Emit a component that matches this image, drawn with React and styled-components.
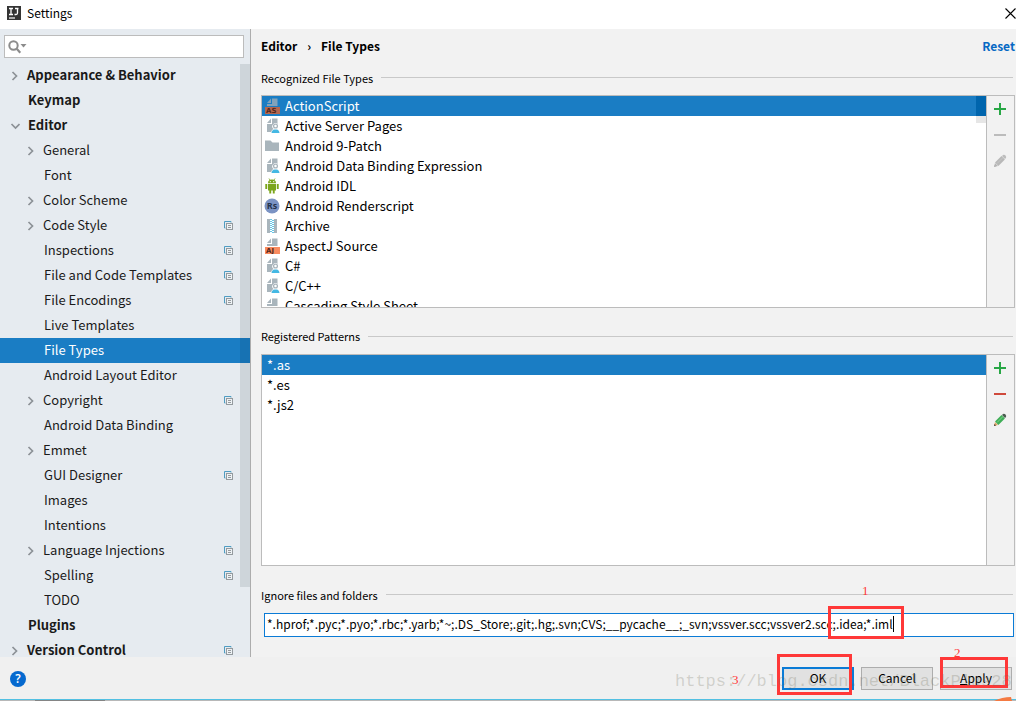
import React, { useState } from "react";
import styled, { createGlobalStyle, css } from "styled-components";

const sans = `"Noto Sans CJK SC", "Open Sans", sans-serif`;

const GlobalStyle = createGlobalStyle`
  * { box-sizing: border-box; }
  body { margin: 0; background: #f2f2f2; }
  button, input { font: inherit; color: inherit; }
`;

const Window = styled.div`
  display: flex;
  flex-direction: column;
  height: 100vh;
  overflow: hidden;
  background: #f2f2f2;
  color: #000;
  font: 13px/20px ${sans};
`;

const TitleBar = styled.header`
  flex: none;
  display: flex;
  align-items: center;
  gap: 6px;
  height: 29px;
  padding: 0 0 3px 7px;
  background: #fff;
`;

const WindowTitle = styled.h1`
  flex: 1;
  margin: 0;
  font-size: 12px;
  font-weight: 400;
`;

const IconButton = styled.button`
  display: flex;
  align-items: center;
  justify-content: center;
  flex: none;
  width: ${(p) => p.$width || 26}px;
  height: 26px;
  padding: 0;
  border: 0;
  background: none;
`;

const Body = styled.div`
  flex: 1;
  min-height: 0;
  display: flex;
`;

const Sidebar = styled.aside`
  flex: none;
  display: flex;
  flex-direction: column;
  width: 251px;
  border-right: 1px solid #adadad;
  background: #e6ebf0;
`;

const SearchBox = styled.label`
  flex: none;
  display: flex;
  align-items: center;
  gap: 2px;
  height: 23px;
  margin: 6px 6px 5px 4px;
  padding: 0 3px;
  border: 1px solid #bcbcbc;
  background: #fff;
`;

const SearchInput = styled.input`
  flex: 1;
  min-width: 0;
  padding: 0;
  border: 0;
  outline: 0;
  background: none;
`;

const TreeArea = styled.nav`
  position: relative;
  flex: 1;
  min-height: 0;
  overflow: hidden;
`;

const Tree = styled.ul`
  margin: 0;
  padding: 0;
  list-style: none;
`;

const TreeRow = styled.li`
  display: flex;
  align-items: center;
  height: 25px;
  padding: 0 17px 0 ${(p) => 8 + p.$level * 16}px;
  color: #1a1a1a;
  ${(p) => p.$bold && css`font-weight: 700;`}
  ${(p) => p.$selected && css`background: #1a7dc4; color: #fff;`}
`;

const ChevronSlot = styled.span`
  flex: none;
  display: flex;
  width: ${(p) => (p.$leaf ? 20 : 19)}px;
`;

const TreeLabel = styled.span`
  flex: 1;
  padding-bottom: 2px;
  white-space: nowrap;
`;

const ScrollThumb = styled.div`
  position: absolute;
  top: ${(p) => p.$top}px;
  right: 0;
  width: 10px;
  height: ${(p) => p.$size}%;
  background: ${(p) => p.$color};
`;

const SelectedThumb = styled.div`
  position: absolute;
  top: 0;
  right: 0;
  width: 10px;
  height: 20px;
  background: #0065ad;
`;

const Main = styled.main`
  flex: 1;
  min-width: 0;
  display: flex;
  flex-direction: column;
  padding: 0 1px 20px 10px;
`;

const PageHeader = styled.div`
  flex: none;
  display: flex;
  align-items: center;
  justify-content: space-between;
  height: 35px;
  padding-bottom: 2px;
  font-weight: 700;
`;

const Crumbs = styled.h2`
  display: flex;
  align-items: center;
  gap: 10px;
  margin: 0;
  font-size: 12px;
`;

const ResetLink = styled.a`
  color: #0669c4;
  font-size: 12px;
  text-decoration: none;
`;

const SectionTitle = styled.div`
  flex: none;
  display: flex;
  align-items: center;
  gap: 8px;
  height: 31px;
  padding: 0 2px 4px 0;
  margin-top: ${(p) => (p.$spaced ? 15 : 0)}px;
  font-size: 11px;
  white-space: nowrap;

  &::after {
    content: "";
    flex: 1;
    height: 1px;
    background: #c9c9c9;
  }
`;

const ListPanel = styled.section`
  flex: 1;
  min-height: 0;
  display: flex;
  border: 1px solid #bcbcbc;
`;

const ListArea = styled.div`
  position: relative;
  flex: 1;
  overflow: hidden;
  background: #fff;
`;

const List = styled.ul`
  margin: 0;
  padding: 0;
  list-style: none;
`;

const ListRow = styled.li`
  display: flex;
  align-items: center;
  gap: 5px;
  height: 20px;
  padding-left: ${(p) => (p.$plain ? 5 : 2)}px;
  white-space: nowrap;
  ${(p) => p.$selected && css`background: #1a7dc4; color: #fff;`}
`;

const ListTools = styled.div`
  flex: none;
  width: 28px;
  border-left: 1px solid #bcbcbc;
  background: #f2f2f2;
`;

const Field = styled.div`
  position: relative;
  flex: none;
  margin: 1px 1px 0 3px;
`;

const FieldInput = styled.input`
  display: block;
  width: 100%;
  height: 24px;
  padding: 0 2px 3px;
  border: 1px solid #0a7bd6;
  outline: 0;
  border-radius: 0;
  background: #fff;
  font-size: 12px;
`;

const Caret = styled.span`
  position: absolute;
  top: 3px;
  left: 629px;
  width: 1px;
  height: 16px;
  background: #000;
`;

const Footer = styled.footer`
  position: relative;
  flex: none;
  display: flex;
  align-items: center;
  gap: 7px;
  height: 44px;
  padding: 0 4px 0 5px;
  background: #f0f0f0;
  border-bottom: 1px solid #b8b8b8;
  box-shadow: inset 0 -1px 0 #52c0e2;
`;

const Spacer = styled.span`
  flex: 1;
`;

const Action = styled.div`
  position: relative;
`;

const DialogButton = styled.button`
  display: block;
  width: 72px;
  height: 23px;
  padding: 0 0 2px;
  border: ${(p) => (p.$primary ? "2px solid #0a7bd6" : "1px solid #adadad")};
  background: #e1e1e1;
  font-size: 12px;
  line-height: 17px;
`;

const MarkBox = styled.span`
  position: absolute;
  top: ${(p) => p.$top}px;
  left: ${(p) => p.$left}px;
  width: ${(p) => p.$width}px;
  height: ${(p) => p.$height}px;
  border: 3px solid #ff3838;
  pointer-events: none;
`;

const MarkNumber = styled.span`
  position: absolute;
  top: ${(p) => p.$top}px;
  left: ${(p) => p.$left}px;
  color: #ff3838;
  font: 13px/14px "Liberation Serif", serif;
`;

const Watermark = styled.span`
  position: absolute;
  z-index: 1;
  left: calc(100% - 341px);
  bottom: 8px;
  color: rgba(110, 110, 90, 0.25);
  font: 17px/20px "Liberation Mono", monospace;
  white-space: nowrap;
  pointer-events: none;
`;

const Swoosh = styled.svg`
  position: absolute;
  right: 0;
  bottom: -1px;
`;

const TaskStrip = styled.span`
  position: absolute;
  left: 35px;
  bottom: -1px;
  width: 70px;
  height: 1px;
  background: #858585;
`;

function LogoIcon() {
  return (
    <svg width="14" height="14" viewBox="0 0 14 14" aria-hidden="true">
      <rect width="14" height="14" fill="#343434" />
      <path d="M2 2.5h4M2 8.5h4M4 2.5v6M8 2.5h3.5M10.5 2.5V7q0 1.5-1.5 1.5H7.5" stroke="#fff" strokeWidth="1.3" fill="none" />
      <path d="M2 12h6" stroke="#fff" strokeWidth="1.2" />
    </svg>
  );
}

function CloseIcon() {
  return (
    <svg width="11" height="11" viewBox="0 0 11 11" aria-hidden="true">
      <path d="M.5.5l10 10M10.5.5l-10 10" stroke="#000" strokeWidth="1.1" />
    </svg>
  );
}

function SearchIcon() {
  return (
    <svg width="19" height="14" viewBox="0 0 19 14" aria-hidden="true">
      <circle cx="5.5" cy="5.5" r="4.2" stroke="#8c8c8c" strokeWidth="2" fill="none" />
      <path d="M8.7 8.7l3.6 4" stroke="#8c8c8c" strokeWidth="2.2" />
      <path d="M12.5 4h6l-3 3.4z" fill="#8c8c8c" />
    </svg>
  );
}

function Chevron({ open }) {
  return (
    <svg width="12" height="10" viewBox="0 0 12 10" aria-hidden="true">
      <path d={open ? "M3.5 3l4 4 4-4" : "M4.5 1l4 4-4 4"} stroke="#8c9196" strokeWidth="1.7" fill="none" />
    </svg>
  );
}

function CopyIcon() {
  return (
    <svg width="9" height="9" viewBox="0 0 9 9" aria-hidden="true">
      <path d="M1.5 7H.5V.5H7V1.5" stroke="#4f9cc2" fill="none" />
      <rect x="2.5" y="2.5" width="6" height="6" stroke="#949a9e" fill="#eef2f5" />
      <path d="M4 4.5h3M4 6.5h3" stroke="#949a9e" />
    </svg>
  );
}

const tag = { AS: "#b5674f", AJ: "#f98b5f" };

function FileIcon({ kind }) {
  if (kind === "folder")
    return (
      <svg width="16" height="16" viewBox="0 0 16 16" aria-hidden="true">
        <path d="M1 2.5h5.5l2 2H15V13H1z" fill="#a9b5bc" />
      </svg>
    );
  if (kind === "android")
    return (
      <svg width="16" height="16" viewBox="0 0 16 16" fill="#7ba51c" aria-hidden="true">
        <path d="M4 5.2a4 3.7 0 0 1 8 0z" />
        <path d="M5 .5l1.3 2M11 .5L9.7 2.5" stroke="#7ba51c" strokeWidth=".8" />
        <path d="M4 6h8v6.5H4zM1.3 6h1.9v5H1.3zM12.8 6h1.9v5h-1.9zM5.3 12h1.9v3.5H5.3zM8.8 12h1.9v3.5H8.8z" />
        <circle cx="6.3" cy="3.7" r=".6" fill="#fff" />
        <circle cx="9.7" cy="3.7" r=".6" fill="#fff" />
      </svg>
    );
  if (kind === "rs")
    return (
      <svg width="16" height="16" viewBox="0 0 16 16" aria-hidden="true">
        <circle cx="8" cy="8" r="7.5" fill="#7b93c4" />
        <text x="8" y="11" textAnchor="middle" fontFamily="Open Sans" fontSize="9" fontWeight="700" fill="#26334d">Rs</text>
      </svg>
    );
  if (kind === "archive")
    return (
      <svg width="16" height="16" viewBox="0 0 16 16" aria-hidden="true">
        <path d="M3 1h3v14H3zM10 1h3v14h-3z" fill="#a9b5bc" />
        <path d="M7 1v14M9 2v13" stroke="#42b8e0" strokeWidth="1.6" strokeDasharray="1 1" />
      </svg>
    );
  if (kind === "user")
    return (
      <svg width="16" height="16" viewBox="0 0 16 16" aria-hidden="true">
        <path d="M8 .5h5.5V14H3V6h5zM7 .5V5H3z" fill="#a9b5bc" />
        <path d="M7 16q0-4 2.5-5a3.2 3.2 0 1 1 4 0q2.500 1 2.500 5z" fill="#fff" />
        <circle cx="11.5" cy="8" r="1.9" fill="none" stroke="#a9b5bc" strokeWidth="1.3" />
        <path d="M7.500 15q.5-3.500 3-3.500h2q2.500 0 3 3.500z" fill="#45b8e3" />
      </svg>
    );
  return (
    <svg width="16" height="16" viewBox="0 0 16 16" aria-hidden="true">
      <path d="M8 .5h5.500V8H3V6h5zM7 .5V5H3z" fill={kind === "AS" ? "#82a3ba" : "#a9b5bc"} />
      {tag[kind] && (
        <>
          <rect x="1" y="9" width="15" height="7" fill={tag[kind]} />
          <text x="2" y="15" fontFamily="DejaVu Sans" fontSize="7" fontWeight="700" fill="#54271c">{kind}</text>
        </>
      )}
    </svg>
  );
}

function PlusIcon() {
  return (
    <svg width="12" height="12" viewBox="0 0 12 12" aria-hidden="true">
      <path d="M0 6h12M6 0v12" stroke="#28a745" strokeWidth="2" />
    </svg>
  );
}

function MinusIcon({ color }) {
  return (
    <svg width="12" height="12" viewBox="0 0 12 12" aria-hidden="true">
      <path d="M0 6h12" stroke={color} strokeWidth="2" />
    </svg>
  );
}

function PencilIcon({ muted }) {
  return (
    <svg width="14" height="14" viewBox="0 0 14 14" aria-hidden="true">
      <path d="M1 13l1-4 3 3z" fill={muted ? "#b5b5b5" : "#e3a868"} />
      <path d="M1 13l.5-2 1.5 1.5z" fill={muted ? "#b5b5b5" : "#333"} />
      <path d="M2 8.600L8.500 2.100l3.400 3.400L5.400 12z" fill={muted ? "#b8b8b8" : "#3fae57"} />
      <path d="M4 9.500l6-6" stroke={muted ? "#c6c6c6" : "#80d48d"} />
      <path d="M9 2l1-1q1.500-.5 2.500.5t.5 2.500l-1 1z" fill={muted ? "#bdbdbd" : "#4b5d50"} />
    </svg>
  );
}

function HelpIcon() {
  return (
    <svg width="16" height="16" viewBox="0 0 16 16" aria-hidden="true">
      <circle cx="8" cy="8" r="8" fill="#0569cf" />
      <text x="8" y="12" textAnchor="middle" fontFamily="Open Sans" fontSize="12" fontWeight="600" fill="#fff">?</text>
    </svg>
  );
}

const tree = [
  { label: "Appearance & Behavior", level: 0, chevron: "closed" },
  { label: "Keymap", level: 0 },
  { label: "Editor", level: 0, chevron: "open", wide: true },
  { label: "General", level: 1, chevron: "closed" },
  { label: "Font", level: 1 },
  { label: "Color Scheme", level: 1, chevron: "closed" },
  { label: "Code Style", level: 1, chevron: "closed", copy: true },
  { label: "Inspections", level: 1, copy: true },
  { label: "File and Code Templates", level: 1, copy: true },
  { label: "File Encodings", level: 1, copy: true },
  { label: "Live Templates", level: 1 },
  { label: "File Types", level: 1, selected: true },
  { label: "Android Layout Editor", level: 1 },
  { label: "Copyright", level: 1, chevron: "closed", copy: true },
  { label: "Android Data Binding", level: 1 },
  { label: "Emmet", level: 1, chevron: "closed" },
  { label: "GUI Designer", level: 1, copy: true },
  { label: "Images", level: 1 },
  { label: "Intentions", level: 1 },
  { label: "Language Injections", level: 1, chevron: "closed", copy: true },
  { label: "Spelling", level: 1, copy: true },
  { label: "TODO", level: 1 },
  { label: "Plugins", level: 0 },
  { label: "Version Control", level: 0, chevron: "closed", copy: true },
];

const fileTypes = [
  ["AS", "ActionScript"],
  ["user", "Active Server Pages"],
  ["folder", "Android 9-Patch"],
  ["user", "Android Data Binding Expression"],
  ["android", "Android IDL"],
  ["rs", "Android Renderscript"],
  ["archive", "Archive"],
  ["AJ", "AspectJ Source"],
  ["user", "C#"],
  ["user", "C/C++"],
  ["css", "Cascading Style Sheet"],
];

const patterns = ["*.as", "*.es", "*.js2"];

function Tools({ muted }) {
  return (
    <ListTools>
      <IconButton type="button" aria-label="Add"><PlusIcon /></IconButton>
      <IconButton type="button" aria-label="Remove"><MinusIcon color={muted ? "#bcbcbc" : "#cf4a3c"} /></IconButton>
      <IconButton type="button" aria-label="Edit"><PencilIcon muted={muted} /></IconButton>
    </ListTools>
  );
}

export default function App() {
  const [ignored, setIgnored] = useState(
    "*.hprof;*.pyc;*.pyo;*.rbc;*.yarb;*~;.DS_Store;.git;.hg;.svn;CVS;__pycache__;_svn;vssver.scc;vssver2.scc;.idea;*.iml"
  );
  return (
    <Window>
      <GlobalStyle />
      <TitleBar>
        <LogoIcon />
        <WindowTitle>Settings</WindowTitle>
        <IconButton type="button" aria-label="Close" $width={12}><CloseIcon /></IconButton>
      </TitleBar>
      <Body>
        <Sidebar>
          <SearchBox>
            <SearchIcon />
            <SearchInput type="text" aria-label="Search settings" />
          </SearchBox>
          <TreeArea>
            <Tree>
              {tree.map((t) => (
                <TreeRow key={t.label} $level={t.level} $bold={t.level === 0} $selected={t.selected}>
                  <ChevronSlot $leaf={!t.chevron || t.wide}>
                    {t.chevron && <Chevron open={t.chevron === "open"} />}
                  </ChevronSlot>
                  <TreeLabel>{t.label}</TreeLabel>
                  {t.copy && <CopyIcon />}
                </TreeRow>
              ))}
            </Tree>
            <ScrollThumb $top={1} $size={88} $color="rgba(0, 20, 30, 0.1)" />
          </TreeArea>
        </Sidebar>
        <Main>
          <PageHeader>
            <Crumbs><span>Editor</span><span>›</span><span>File Types</span></Crumbs>
            <ResetLink href="#reset">Reset</ResetLink>
          </PageHeader>
          <SectionTitle>Recognized File Types</SectionTitle>
          <ListPanel>
            <ListArea>
              <List>
                {fileTypes.map(([kind, name], i) => (
                  <ListRow key={name} $selected={i === 0}><FileIcon kind={kind} />{name}</ListRow>
                ))}
              </List>
              <ScrollThumb $top={0} $size={13} $color="#e6e6e6" />
              <SelectedThumb />
            </ListArea>
            <Tools muted />
          </ListPanel>
          <SectionTitle $spaced>Registered Patterns</SectionTitle>
          <ListPanel>
            <ListArea>
              <List>
                {patterns.map((p, i) => (
                  <ListRow key={p} $plain $selected={i === 0}>{p}</ListRow>
                ))}
              </List>
            </ListArea>
            <Tools />
          </ListPanel>
          <SectionTitle as="label" htmlFor="ignored" $spaced>Ignore files and folders</SectionTitle>
          <Field>
            <FieldInput id="ignored" type="text" value={ignored} onChange={(e) => setIgnored(e.target.value)} />
            <Caret />
            <MarkBox $top={-7} $left={564} $width={76} $height={33} />
            <MarkNumber $top={-29} $left={598}>1</MarkNumber>
          </Field>
        </Main>
      </Body>
      <Footer>
        <IconButton type="button" aria-label="Help"><HelpIcon /></IconButton>
        <Spacer />
        <Action>
          <DialogButton type="button" $primary>OK</DialogButton>
          <MarkBox $top={-13} $left={-5} $width={75} $height={41} />
          <MarkNumber $top={6} $left={-50}>3</MarkNumber>
        </Action>
        <Action><DialogButton type="button">Cancel</DialogButton></Action>
        <Action>
          <DialogButton type="button"><u>A</u>pply</DialogButton>
          <MarkBox $top={-10} $left={0} $width={68} $height={31} />
          <MarkNumber $top={-21} $left={14}>2</MarkNumber>
        </Action>
        <Watermark>https://blog.csdn.net/BlackPlus28</Watermark>
        <TaskStrip />
        <Swoosh width="22" height="4" viewBox="0 0 22 4" aria-hidden="true">
          <path d="M0 4q8-4 17-4l1 4z" fill="#f47a42" />
        </Swoosh>
      </Footer>
    </Window>
  );
}
